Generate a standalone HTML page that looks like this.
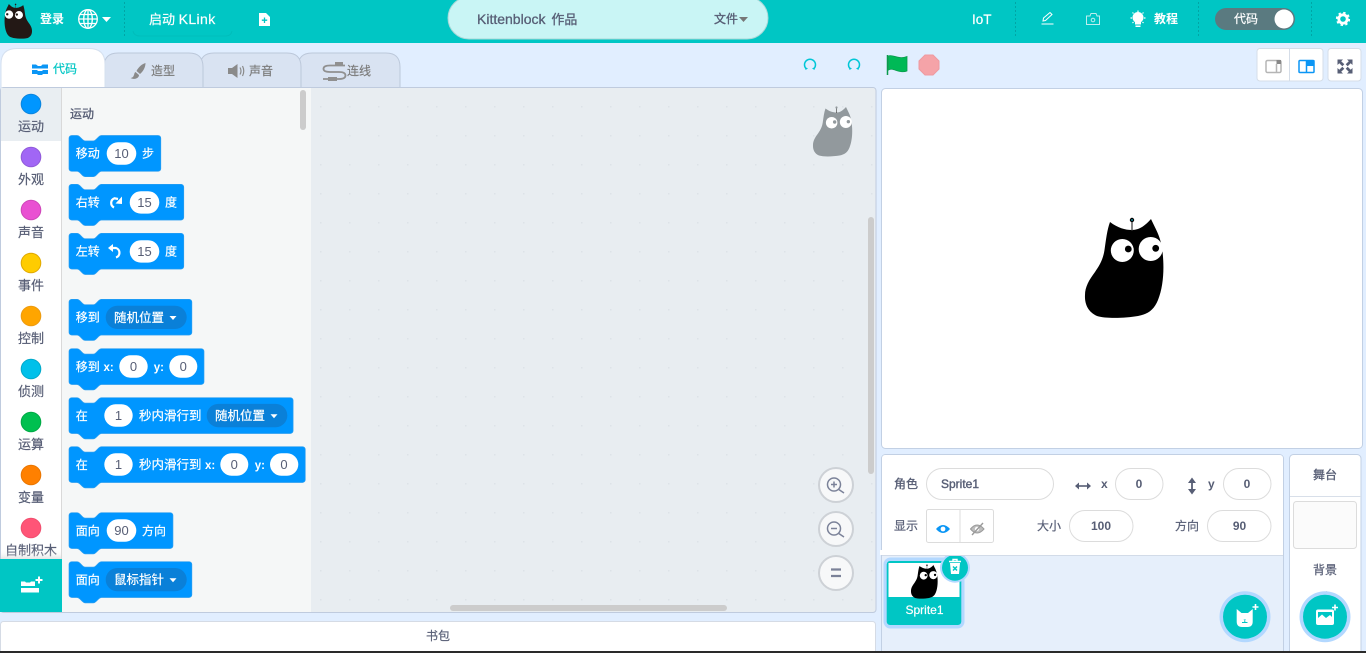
<!DOCTYPE html>
<html lang="zh">
<head>
<meta charset="utf-8">
<title>Kittenblock</title>
<style>
html,body{margin:0;padding:0;width:1366px;height:653px;overflow:hidden;background:#e1eeff}
svg{display:block;position:absolute;left:0;top:0}
text{font-family:"Liberation Sans","Noto Sans CJK SC",sans-serif;font-size:12px;fill:#575e75;stroke:#575e75;stroke-width:.2}
.w{fill:#fff;stroke:#fff}
.b{font-weight:700;stroke:none}
.w.b{stroke:none}
.m{text-anchor:middle}
.n{font-size:13px;stroke-width:0}
.cat{font-size:13px;text-anchor:middle}
.l{font-size:12.5px}
.blk{fill:#0096ff;stroke:#2d9ff0;stroke-width:1}
.pill{fill:#fff}
.dd{fill:#0a80d8}
.car{fill:#fff}
.fld{fill:#fff;stroke:#dcdcdc;stroke-width:1}
.sep{stroke:#00a5a5;stroke-width:1;stroke-dasharray:2 2}
.g{fill:#7c7c7c;stroke:#7c7c7c}
</style>
</head>
<body>
<svg xmlns="http://www.w3.org/2000/svg" width="1366" height="653" viewBox="0 0 1366 653">
<defs>
<g id="cb">
<path d="M50 22C58 28 65 30 72 30C78 30 84 27 91 19C95 28 100 35 102 48C104.500 65 104 85 98 100C94 110 88 114 78 116C66 118 47 119 37 116C28 112 24.500 104 25 95C25 87 29 80 35 72C39 66 43 60 44.500 50C46 40 47 30 50 22Z"/>
<path d="M72 31V21" stroke="#333" stroke-width="1.200" fill="none"/>
<circle cx="72" cy="20" r="2.200"/>
<circle cx="62.300" cy="50.500" r="11.500" fill="#fff"/>
<circle cx="90.700" cy="49" r="12" fill="#fff"/>
<circle cx="68.300" cy="49" r="3.400"/>
<circle cx="95.700" cy="48.300" r="3.400"/>
</g>
<pattern id="dots" x="1" y="19" width="29" height="29" patternUnits="userSpaceOnUse">
<rect x="0" y="0" width="1.500" height="1.500" fill="#dde2e8"/>
</pattern>
<linearGradient id="fade" x1="0" x2="0" y1="0" y2="1">
<stop offset="0" stop-color="#fff" stop-opacity="0"/>
<stop offset="1" stop-color="#ccc"/>
</linearGradient>
</defs>

<!-- page -->
<rect width="1366" height="653" fill="#e1eeff"/>

<!-- top bar -->
<rect width="1366" height="43" fill="#00c6c4"/>
<use href="#cb" transform="translate(40.750,-2.600) scale(-.35,.35)" fill="#231815"/>
<text x="40" y="23" class="w b">登录</text>
<g fill="none" stroke="#fff" stroke-width="1.300">
<circle cx="88" cy="19" r="9.300"/>
<ellipse cx="88" cy="19" rx="4.300" ry="9.300"/>
<path d="M88 9.700V28.300M78.700 19H97.300M80 14.500H96M80 23.500H96"/>
</g>
<path d="M102 17H111L106.500 22Z" fill="#fff"/>
<path class="sep" d="M124.500 2V36"/>
<text x="149" y="24" class="w" style="font-size:13px">启动 <tspan style="font-size:14px;letter-spacing:.4px">KLink</tspan></text>
<path d="M133 31Q134 36 140 36H226Q231 36 232 31" fill="none" stroke="#00bdbb" stroke-width="1"/>
<path d="M259 13H266L270 17V26H259Z" fill="#fff"/>
<path d="M264.500 17.500V23M261.800 20.200H267.200" stroke="#00c6c4" stroke-width="1.300"/>

<rect x="448" y="-3" width="320" height="42" rx="21" fill="#c9f5f5" stroke="#a9d8d8"/>
<text x="477" y="24" style="font-size:14px;stroke-width:.3">Kittenblock <tspan dx="2" style="font-size:13px">作品</tspan></text>
<text x="714" y="23" style="stroke-width:.35">文件</text>
<path d="M739 17H748L743.500 22Z" fill="#777"/>

<text x="972" y="24" class="w" style="font-size:13.500px">IoT</text>
<path class="sep" d="M1015.500 2V36"/>
<path d="M1041.500 24H1053.500M1043 21L1043.500 18L1050 12.500L1052 14.500L1045.500 20.500Z" fill="none" stroke="#fff" stroke-width="1"/>
<g fill="none" stroke="#bdeeee" stroke-width="1">
<path d="M1086.500 16H1090L1091 13.500H1096L1097 16H1099.500V24.500H1086.500Z"/>
<circle cx="1093" cy="20" r="1.800"/>
</g>
<g fill="#fff">
<circle cx="1138" cy="17.500" r="5.500"/>
<path d="M1135 21H1141V24.500H1135ZM1135.500 25.500H1140.500V27H1135.500Z"/>
</g>
<path d="M1138 10.500V12M1130.500 18H1132M1144 18H1145.500M1132.500 12.500L1133.500 13.500M1143.500 12.500L1142.500 13.500M1132.500 23L1133.500 22M1143.500 23L1142.500 22" stroke="#fff" stroke-width="1.200"/>
<text x="1154" y="23" class="w b">教程</text>
<path class="sep" d="M1198.500 2V36"/>
<rect x="1215" y="8" width="80" height="22" rx="11" fill="#5a7a80"/>
<text x="1234" y="23" class="w">代码</text>
<circle cx="1284" cy="19" r="9.500" fill="#fff"/>
<path class="sep" d="M1311.500 2V36"/>
<circle cx="1343" cy="19" r="4.200" fill="none" stroke="#fff" stroke-width="2.800"/>
<circle cx="1343" cy="19" r="6.200" fill="none" stroke="#fff" stroke-width="1.800" stroke-dasharray="2.400 2.470"/>

<!-- run row -->
<g fill="none" stroke="#00c6d6" stroke-width="1.500">
<path d="M806 68.500A5.500 5.500 0 1 1 814 68.500"/>
<path d="M850 68.500A5.500 5.500 0 1 1 858 68.500"/>
</g>
<path d="M805 67L805.500 70L808 68.500ZM815 67L814.500 70L812 68.500ZM849 67L849.500 70L852 68.500ZM859 67L858.500 70L856 68.500Z" fill="#00c6d6"/>
<path d="M887.500 55V75" stroke="#0a9b4c" stroke-width="1.500"/>
<path d="M888.500 56C893 54 898 60 907 56.500V71C899 74 893 67 888.500 70Z" fill="#00b956" stroke="#0a9b4c" stroke-width=".8"/>
<path d="M925 55H933L939 61V69L933 75H925L919 69V61Z" fill="#f5a3a8" stroke="#ee9aa0"/>

<!-- view buttons -->
<rect x="1257" y="48.500" width="66" height="32.500" rx="3" fill="#fff" stroke="#d5dde8"/>
<path d="M1289.500 49V81" stroke="#d5dde8"/>
<rect x="1328" y="48.500" width="33" height="32.500" rx="3" fill="#fff" stroke="#d5dde8"/>
<rect x="1266" y="60.500" width="15" height="12" rx="1.500" fill="none" stroke="#b5b5b5" stroke-width="1.500"/>
<rect x="1276.500" y="60" width="4.500" height="4" fill="#888"/>
<path d="M1276.500 64V72" stroke="#b5b5b5" stroke-width="1.500"/>
<rect x="1299" y="60.500" width="15" height="12" rx="1" fill="none" stroke="#0b96f5" stroke-width="1.500"/>
<path d="M1306.500 60V73" stroke="#0b96f5" stroke-width="1.500"/>
<rect x="1306.500" y="60" width="8" height="6" fill="#0b96f5"/>
<g fill="#575e75">
<path d="M1337.500 59.500H1343L1341.200 61.300L1344.300 64.300L1342.300 66.300L1339.300 63.300L1337.500 65Z"/>
<path d="M1352.500 59.500H1347L1348.800 61.300L1345.700 64.300L1347.700 66.300L1350.700 63.300L1352.500 65Z"/>
<path d="M1337.500 73.500H1343L1341.200 71.700L1344.300 68.700L1342.300 66.700L1339.300 69.700L1337.500 68Z"/>
<path d="M1352.500 73.500H1347L1348.800 71.700L1345.700 68.700L1347.700 66.700L1350.700 69.700L1352.500 68Z"/>
</g>

<!-- tabs -->
<g fill="#d9e3f2" stroke="#bcc8da">
<path d="M298 88V67Q298 53 312 53H386Q400 53 400 67V88Z"/>
<path d="M200 88V67Q200 53 214 53H287Q301 53 301 67V88Z"/>
<path d="M104 88V67Q104 53 118 53H189Q203 53 203 67V88Z"/>
</g>
<path d="M1 88V64Q1 48.500 17 48.500H89Q105 48.500 105 64V88Z" fill="#fff" stroke="#d5e0ef"/>

<g fill="#0b96f5">
<path d="M32 64.500H36L38 66H41L42.500 64.500H48V68.500H32Z"/>
<path d="M32 70H37L38 71H42L43 70H48V74H43L42 75H38L37 74H32Z"/>
</g>
<text x="53" y="73" style="fill:#00c6c4;stroke:#00c6c4">代码</text>
<path d="M145.500 63C142 64 138.500 67 136.500 71L140 74C143 71.500 145.500 67.500 145.500 63Z" fill="#8a8a8a"/>
<path d="M135.500 72C133.500 73 135 77.500 130.500 78C134 80 139 78.500 139 75Z" fill="#8a8a8a"/>
<text x="151" y="75" class="g">造型</text>
<path d="M228 68H232L237.500 64V78L232 74H228Z" fill="#8a8a8a"/>
<path d="M240 67.500Q242 71 240 74.500M242.500 66Q245 71 242.500 76" fill="none" stroke="#8a8a8a" stroke-width="1.200"/>
<text x="249" y="75" class="g">声音</text>
<path d="M345 65.500H330Q323.500 65.500 323.500 68.800Q323.500 72 330 72H339Q345.500 72 345.500 75.500Q345.500 79 339 79H323" fill="none" stroke="#909090" stroke-width="1.800"/>
<g fill="#909090"><rect x="335" y="62" width="8" height="4"/><rect x="328" y="77" width="9" height="4"/></g>
<text x="347" y="75" class="g">连线</text>

<!-- code area -->
<rect x=".5" y="87.500" width="875.500" height="525" rx="3" fill="#e8edf1" stroke="#bfcbde"/>
<rect x="1" y="88" width="60" height="524" fill="#fff"/>
<rect x="1" y="88" width="60" height="53" fill="#e9eef2"/>
<rect x="61" y="88" width="1" height="524" fill="#d9d9d9"/>
<rect x="62" y="88" width="249" height="524" fill="#f5f7f7"/>
<rect x="311" y="88" width="564" height="524" fill="url(#dots)"/>

<!-- categories -->
<g stroke-width="1">
<circle cx="31" cy="104" r="9.800" fill="#0096ff" stroke="#0a84dd"/>
<circle cx="31" cy="157" r="9.800" fill="#a166f5" stroke="#8f59d8"/>
<circle cx="31" cy="210" r="9.800" fill="#e950d2" stroke="#cd45b8"/>
<circle cx="31" cy="263" r="9.800" fill="#ffcc00" stroke="#e0a800"/>
<circle cx="31" cy="316" r="9.800" fill="#ffa500" stroke="#ec9a10"/>
<circle cx="31" cy="369" r="9.800" fill="#00c0ea" stroke="#00a8c8"/>
<circle cx="31" cy="422" r="9.800" fill="#00c050" stroke="#00a845"/>
<circle cx="31" cy="475" r="9.800" fill="#ff8000" stroke="#e87500"/>
<circle cx="31" cy="528" r="9.800" fill="#ff5577" stroke="#f04e6e"/>
</g>
<text x="31" y="131" class="cat">运动</text>
<text x="31" y="184" class="cat">外观</text>
<text x="31" y="237" class="cat">声音</text>
<text x="31" y="290" class="cat">事件</text>
<text x="31" y="343" class="cat">控制</text>
<text x="31" y="396" class="cat">侦测</text>
<text x="31" y="449" class="cat">运算</text>
<text x="31" y="502" class="cat">变量</text>
<text x="31" y="555" class="cat">自制积木</text>
<rect x="1" y="549" width="60" height="10" fill="url(#fade)" opacity=".5"/>
<rect x="0" y="559" width="62" height="53" fill="#00c6c4"/>
<g fill="#fff">
<path d="M21 581.500H25L26 582.500H30L31 581.500H35V586H21Z"/>
<path d="M21 588H39V592.500H21Z"/>
<path d="M38 576.500H40V579H42.500V581H40V583.500H38V581H35.500V579H38Z"/>
</g>

<!-- palette -->
<text x="70" y="118" style="stroke-width:.35">运动</text>

<g transform="translate(69,135.500) scale(.675)"><path class="blk" d="M0 4A4 4 0 0 1 4 0H12c2 0 3 1 4 2l4 4c1 1 2 2 4 2h12c2 0 3-1 4-2l4-4c1-1 2-2 4-2H132a4 4 0 0 1 4 4V49a4 4 0 0 1-4 4H48c-2 0-3 1-4 2l-4 4c-1 1-2 2-4 2H24c-2 0-3-1-4-2l-4-4c-1-1-2-2-4-2H4a4 4 0 0 1-4-4z"/></g>
<text x="75.700" y="157.500" class="w">移动</text>
<rect class="pill" x="106.700" y="142.300" width="29.600" height="22.400" rx="11.200"/>
<text x="121.500" y="158" class="m n">10</text>
<text x="142" y="157.500" class="w">步</text>

<g transform="translate(69,184.300) scale(.675)"><path class="blk" d="M0 4A4 4 0 0 1 4 0H12c2 0 3 1 4 2l4 4c1 1 2 2 4 2h12c2 0 3-1 4-2l4-4c1-1 2-2 4-2H166a4 4 0 0 1 4 4V49a4 4 0 0 1-4 4H48c-2 0-3 1-4 2l-4 4c-1 1-2 2-4 2H24c-2 0-3-1-4-2l-4-4c-1-1-2-2-4-2H4a4 4 0 0 1-4-4z"/></g>
<text x="75.700" y="206.500" class="w">右转</text>
<path d="M114 207.500A5 5 0 0 1 114.500 198.300L118 199" fill="none" stroke="#fff" stroke-width="2.200"/>
<path d="M122 196.500V204L115.500 203.500Z" fill="#fff"/>
<rect class="pill" x="129.700" y="191.200" width="29.600" height="22.400" rx="11.200"/>
<text x="144.500" y="207" class="m n">15</text>
<text x="165" y="206.500" class="w">度</text>

<g transform="translate(69,233.300) scale(.675)"><path class="blk" d="M0 4A4 4 0 0 1 4 0H12c2 0 3 1 4 2l4 4c1 1 2 2 4 2h12c2 0 3-1 4-2l4-4c1-1 2-2 4-2H166a4 4 0 0 1 4 4V49a4 4 0 0 1-4 4H48c-2 0-3 1-4 2l-4 4c-1 1-2 2-4 2H24c-2 0-3-1-4-2l-4-4c-1-1-2-2-4-2H4a4 4 0 0 1-4-4z"/></g>
<text x="75.700" y="255.500" class="w">左转</text>
<path d="M112 248H116A5 5 0 0 1 116 257.500" fill="none" stroke="#fff" stroke-width="2.200"/>
<path d="M108 248L113 244V252Z" fill="#fff"/>
<rect class="pill" x="129.700" y="240.200" width="29.600" height="22.400" rx="11.200"/>
<text x="144.500" y="256" class="m n">15</text>
<text x="165" y="255.500" class="w">度</text>

<g transform="translate(69,299.300) scale(.675)"><path class="blk" d="M0 4A4 4 0 0 1 4 0H12c2 0 3 1 4 2l4 4c1 1 2 2 4 2h12c2 0 3-1 4-2l4-4c1-1 2-2 4-2H178a4 4 0 0 1 4 4V49a4 4 0 0 1-4 4H48c-2 0-3 1-4 2l-4 4c-1 1-2 2-4 2H24c-2 0-3-1-4-2l-4-4c-1-1-2-2-4-2H4a4 4 0 0 1-4-4z"/></g>
<text x="75.700" y="321.500" class="w">移到</text>
<rect class="dd" x="105.700" y="305.700" width="81" height="23.300" rx="11.600"/>
<text x="114" y="321.800" class="w l">随机位置</text>
<path class="car" d="M169.500 316H176.500L173 320Z"/>

<g transform="translate(69,348.700) scale(.675)"><path class="blk" d="M0 4A4 4 0 0 1 4 0H12c2 0 3 1 4 2l4 4c1 1 2 2 4 2h12c2 0 3-1 4-2l4-4c1-1 2-2 4-2H196a4 4 0 0 1 4 4V49a4 4 0 0 1-4 4H48c-2 0-3 1-4 2l-4 4c-1 1-2 2-4 2H24c-2 0-3-1-4-2l-4-4c-1-1-2-2-4-2H4a4 4 0 0 1-4-4z"/></g>
<text x="75.700" y="370.800" class="w">移到</text>
<text x="103.500" y="370.800" class="w b" style="font-size:11.500px">x:</text>
<rect class="pill" x="119.300" y="355.300" width="28.400" height="22.400" rx="11.200"/>
<text x="133.500" y="371" class="m n">0</text>
<text x="153.700" y="370.800" class="w b" style="font-size:11.500px">y:</text>
<rect class="pill" x="169.300" y="355.300" width="28" height="22.400" rx="11.200"/>
<text x="183.300" y="371" class="m n">0</text>

<g transform="translate(69,397.700) scale(.675)"><path class="blk" d="M0 4A4 4 0 0 1 4 0H12c2 0 3 1 4 2l4 4c1 1 2 2 4 2h12c2 0 3-1 4-2l4-4c1-1 2-2 4-2H328a4 4 0 0 1 4 4V49a4 4 0 0 1-4 4H48c-2 0-3 1-4 2l-4 4c-1 1-2 2-4 2H24c-2 0-3-1-4-2l-4-4c-1-1-2-2-4-2H4a4 4 0 0 1-4-4z"/></g>
<text x="75.700" y="419.800" class="w">在</text>
<rect class="pill" x="104.300" y="404.300" width="28.400" height="22.400" rx="11.200"/>
<text x="118.500" y="420" class="m n">1</text>
<text x="139" y="419.800" class="w l">秒内滑行到</text>
<rect class="dd" x="206.700" y="403.900" width="80.600" height="23.300" rx="11.600"/>
<text x="215" y="420" class="w l">随机位置</text>
<path class="car" d="M270.500 414.200H277.500L274 418.200Z"/>

<g transform="translate(69,446.700) scale(.675)"><path class="blk" d="M0 4A4 4 0 0 1 4 0H12c2 0 3 1 4 2l4 4c1 1 2 2 4 2h12c2 0 3-1 4-2l4-4c1-1 2-2 4-2H346a4 4 0 0 1 4 4V49a4 4 0 0 1-4 4H48c-2 0-3 1-4 2l-4 4c-1 1-2 2-4 2H24c-2 0-3-1-4-2l-4-4c-1-1-2-2-4-2H4a4 4 0 0 1-4-4z"/></g>
<text x="75.700" y="468.800" class="w">在</text>
<rect class="pill" x="104.300" y="453.300" width="28.400" height="22.400" rx="11.200"/>
<text x="118.500" y="469" class="m n">1</text>
<text x="139" y="468.800" class="w l">秒内滑行到</text>
<text x="205" y="468.800" class="w b" style="font-size:11.500px">x:</text>
<rect class="pill" x="220.300" y="453.300" width="28" height="22.400" rx="11.200"/>
<text x="234.300" y="469" class="m n">0</text>
<text x="254.700" y="468.800" class="w b" style="font-size:11.500px">y:</text>
<rect class="pill" x="270" y="453.300" width="28.300" height="22.400" rx="11.200"/>
<text x="284" y="469" class="m n">0</text>

<g transform="translate(69,512.700) scale(.675)"><path class="blk" d="M0 4A4 4 0 0 1 4 0H12c2 0 3 1 4 2l4 4c1 1 2 2 4 2h12c2 0 3-1 4-2l4-4c1-1 2-2 4-2H150a4 4 0 0 1 4 4V49a4 4 0 0 1-4 4H48c-2 0-3 1-4 2l-4 4c-1 1-2 2-4 2H24c-2 0-3-1-4-2l-4-4c-1-1-2-2-4-2H4a4 4 0 0 1-4-4z"/></g>
<text x="75.700" y="535" class="w">面向</text>
<rect class="pill" x="106.700" y="519.300" width="29.600" height="22.400" rx="11.200"/>
<text x="121.500" y="535" class="m n">90</text>
<text x="142" y="535" class="w">方向</text>

<g transform="translate(69,561.700) scale(.675)"><path class="blk" d="M0 4A4 4 0 0 1 4 0H12c2 0 3 1 4 2l4 4c1 1 2 2 4 2h12c2 0 3-1 4-2l4-4c1-1 2-2 4-2H178a4 4 0 0 1 4 4V49a4 4 0 0 1-4 4H48c-2 0-3 1-4 2l-4 4c-1 1-2 2-4 2H24c-2 0-3-1-4-2l-4-4c-1-1-2-2-4-2H4a4 4 0 0 1-4-4z"/></g>
<text x="75.700" y="584" class="w">面向</text>
<rect class="dd" x="105.700" y="568" width="81" height="23.300" rx="11.600"/>
<text x="114" y="584" class="w l">鼠标指针</text>
<path class="car" d="M169.500 578.300H176.500L173 582.300Z"/>

<!-- scrollbars -->
<rect x="300" y="90" width="6" height="40" rx="3" fill="#ccc"/>
<rect x="868" y="217" width="6" height="257" rx="3" fill="#ccc"/>
<rect x="450" y="605" width="277" height="6" rx="3" fill="#ccc"/>

<!-- watermark -->
<use href="#cb" transform="translate(800.500,97.500) scale(.5)" fill="#92999d"/>

<!-- zoom controls -->
<g fill="#f7f8f9" stroke="#cdd1d6" stroke-width="2">
<circle cx="836" cy="485" r="17"/>
<circle cx="836" cy="529" r="17"/>
<circle cx="836" cy="573" r="17"/>
</g>
<g fill="none" stroke="#7b8299" stroke-width="1.500">
<circle cx="834" cy="484.500" r="6.500"/><path d="M838.800 489.500L844 493M831 484.500H837M834 481.500V487.500"/>
<circle cx="834" cy="528.500" r="6.500"/><path d="M838.800 533.500L844 537M831 528.500H837"/>
</g>
<path d="M831 569.500H841M831 576H841" stroke="#7b8299" stroke-width="2.200"/>

<!-- backpack -->
<rect x=".5" y="621.500" width="875" height="32" rx="3" fill="#fff" stroke="#d5dbe5"/>
<text x="438" y="640" class="m">书包</text>

<!-- stage -->
<rect x="881.500" y="88.500" width="481" height="360" rx="4" fill="#fff" stroke="#c2d0e4"/>
<use href="#cb" transform="translate(1060,200)" fill="#000"/>
<circle cx="1132" cy="220" r=".9" fill="#13a8c0"/>

<!-- sprite panel -->
<rect x="881.500" y="454.500" width="402" height="203" rx="4" fill="#e6effb" stroke="#c2d0e4"/>
<path d="M882 555V458.500Q882 455 885.500 455H1279.500Q1283 455 1283 458.500V555Z" fill="#fff"/>
<path d="M882 555.500H1283" stroke="#d2dbe8"/>

<text x="894" y="488" style="stroke-width:.35">角色</text>
<rect class="fld" x="926.500" y="468.500" width="127" height="31" rx="15.500"/>
<text x="941" y="488" style="stroke-width:.4">Sprite1</text>
<path d="M1076 486H1090" stroke="#575e75" stroke-width="1.600"/>
<path d="M1075 486L1079 482.500V489.500ZM1091 486L1087 482.500V489.500Z" fill="#575e75"/>
<text x="1101" y="488" class="b">x</text>
<rect class="fld" x="1115.500" y="468.500" width="47.500" height="31" rx="15.500"/>
<text x="1139" y="488" class="m b">0</text>
<path d="M1192 480V492" stroke="#575e75" stroke-width="1.800"/>
<path d="M1192 477.500L1188 483H1196ZM1192 494.500L1188 489H1196Z" fill="#575e75"/>
<text x="1208" y="488" class="b">y</text>
<rect class="fld" x="1223.500" y="468.500" width="47.500" height="31" rx="15.500"/>
<text x="1247" y="488" class="m b">0</text>

<text x="894" y="530">显示</text>
<rect class="fld" x="926.500" y="509.500" width="67" height="33" rx="2"/>
<path d="M960 510V542" stroke="#dcdcdc" stroke-width="1"/>
<path d="M936 529Q943 521 950 529Q943 537 936 529Z" fill="#0b96f5"/>
<circle cx="943" cy="529" r="2.400" fill="#fff"/>
<path d="M970.500 529Q977 521 984 529Q977 537 970.500 529Z" fill="#bdbdbd" stroke="#9a9a9a"/>
<circle cx="977" cy="529" r="2.200" fill="#fff"/>
<path d="M972 535L983 523" stroke="#9a9a9a" stroke-width="1.400"/>
<text x="1037" y="530">大小</text>
<rect class="fld" x="1069.500" y="510.500" width="63.500" height="31" rx="15.500"/>
<text x="1101" y="530" class="m b">100</text>
<text x="1175" y="530">方向</text>
<rect class="fld" x="1207.500" y="510.500" width="63.500" height="31" rx="15.500"/>
<text x="1239.500" y="530" class="m b">90</text>

<!-- sprite thumb -->
<rect x="883.500" y="557.500" width="81" height="71" rx="7" fill="#b3d8ff"/>
<rect x="886.700" y="561" width="74.600" height="64" rx="3.500" fill="#00c6c4"/>
<rect x="888.500" y="563" width="71" height="34" fill="#fff"/>
<use href="#cb" transform="translate(902.500,558.500) scale(.34)" fill="#000"/>
<text x="924.500" y="614" class="m w">Sprite1</text>

<circle cx="955" cy="567.700" r="15" fill="#b3d8ff"/>
<circle cx="955" cy="567.700" r="13" fill="#00c6c4"/>
<rect x="880" y="550" width="110" height="5" fill="#fff"/>
<path d="M882 555.500H1000" stroke="#d2dbe8"/>
<path d="M949 561.500H961M953 561.500V559.500H957V561.500" fill="none" stroke="#fff" stroke-width="1.400"/>
<path d="M950 563H960L959 574H951Z" fill="#fff"/>
<path d="M953 566.500L957 570.500M957 566.500L953 570.500" stroke="#00c6c4" stroke-width="1.500"/>

<!-- add sprite button -->
<circle cx="1245" cy="616.700" r="25.500" fill="#b3d8ff"/>
<circle cx="1245" cy="616.700" r="22" fill="#00c6c4"/>
<path d="M1236.700 609L1241.500 613H1248L1252.700 609V621.500Q1252.700 627 1247.500 627H1242Q1236.700 627 1236.700 621.500Z" fill="#fff"/>
<path d="M1243.500 619.500H1246L1244.800 621Z" fill="#00c6c4"/>
<path d="M1244.800 621V622.500M1242 622.500H1247.500" stroke="#00c6c4" stroke-width="1"/>
<path d="M1255.500 604V610M1252.500 607H1258.500" stroke="#fff" stroke-width="1.600"/>

<!-- stage panel -->
<rect x="1289.500" y="454.500" width="71.500" height="203" rx="4" fill="#fff" stroke="#c2d0e4"/>
<path d="M1290 496.500H1361" stroke="#d8dfe9"/>
<text x="1325" y="479" class="m" style="stroke-width:.35">舞台</text>
<rect x="1293.500" y="501.500" width="63" height="47" rx="3" fill="#fbfbfb" stroke="#dcdcdc"/>
<text x="1325" y="574" class="m">背景</text>
<path d="M1324 594L1327 591.500" stroke="#777" stroke-width="1"/>
<circle cx="1325" cy="616.700" r="25.500" fill="#b3d8ff"/>
<circle cx="1325" cy="616.700" r="22" fill="#00c6c4"/>
<rect x="1316" y="609.500" width="18" height="15.500" rx="2" fill="#fff"/>
<path d="M1318 618L1322 614.500L1326 618L1330 615L1332 617V612H1318Z" fill="#00c6c4"/>
<path d="M1335 604.500V610.500M1332 607.500H1338" stroke="#fff" stroke-width="1.600"/>

<!-- bottom edge -->
<rect x="0" y="651" width="1366" height="2" fill="#2a2a2a"/>
</svg>
</body>
</html>
